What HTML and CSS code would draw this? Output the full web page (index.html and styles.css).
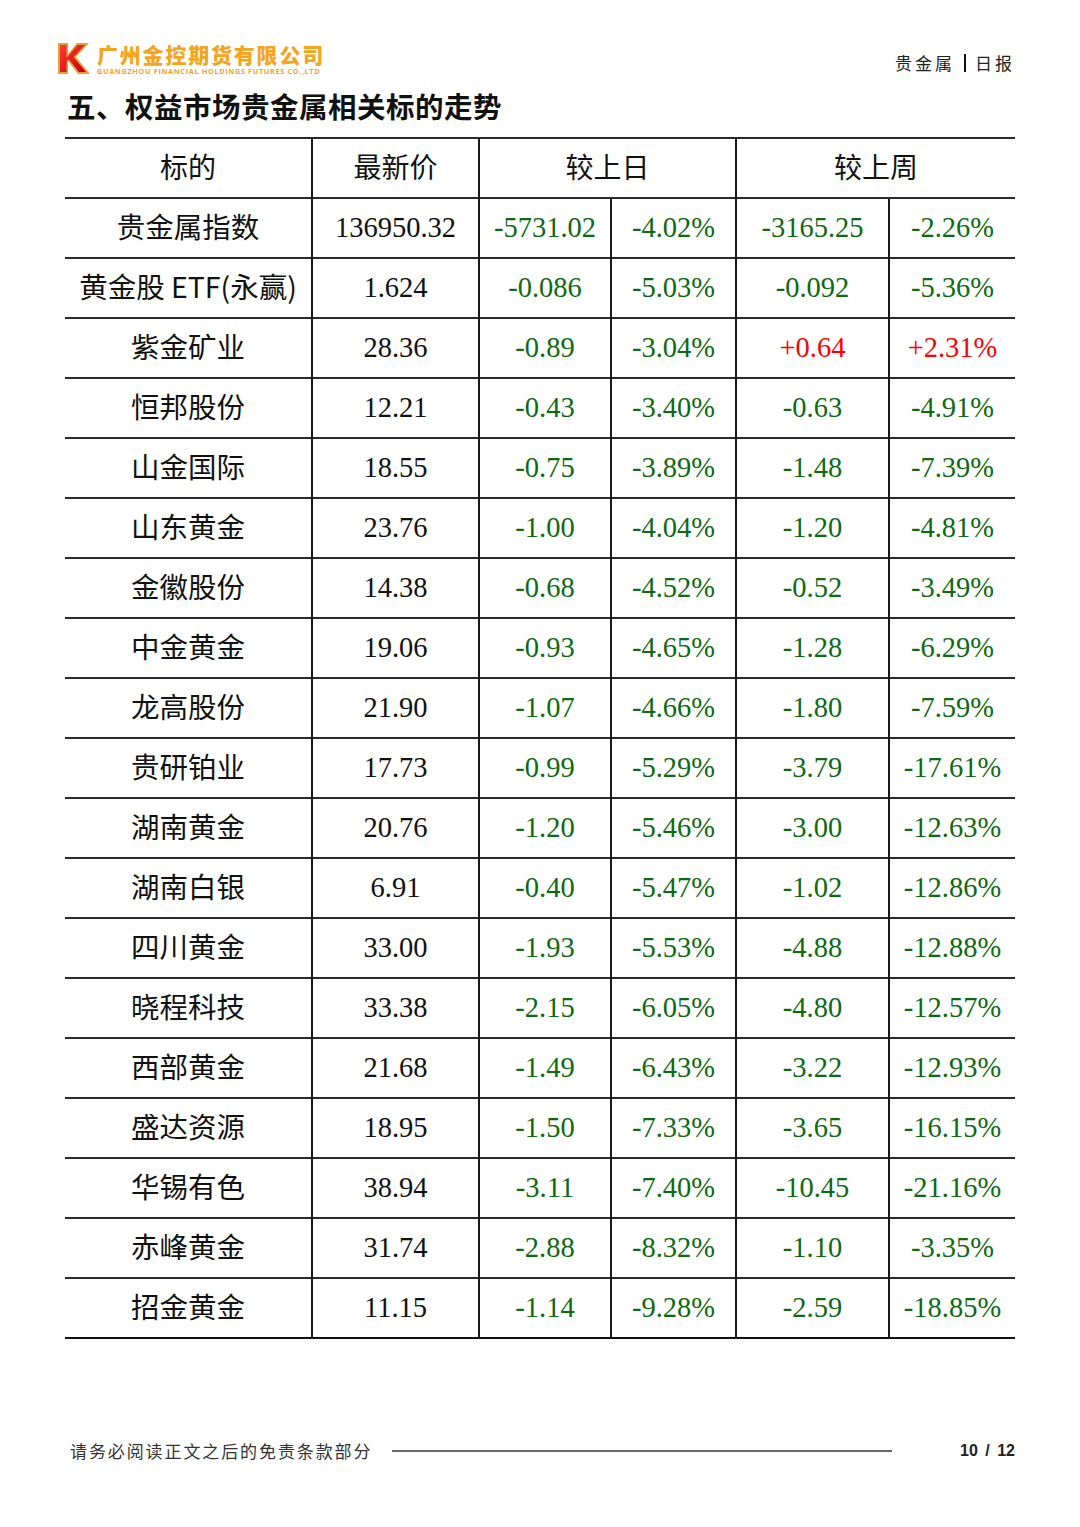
FILE: index.html
```html
<!DOCTYPE html>
<html lang="zh-CN">
<head>
<meta charset="utf-8">
<link rel="stylesheet" href="styles.css">
</head>
<body>
<div class="page">
  <header class="top">
    <div class="logo">
      <svg class="logo-k" width="34" height="33" viewBox="0 0 34 33">
        <defs>
          <linearGradient id="kg" x1="0" y1="0" x2="1" y2="1">
            <stop offset="0" stop-color="#ff3b2f"/>
            <stop offset="1" stop-color="#c8000a"/>
          </linearGradient>
        </defs>
        <path d="M1 1 H11 V12 L20 1 H32 L19 15 L33 32 H21 L11 19 V32 H1 Z" fill="#e0a33a"/>
        <path d="M3 3 H9.5 V16 L20.5 3 H28 L16.5 15 L29 30 H22 L11.5 17 L9.5 19.5 V30 H3 Z" fill="url(#kg)"/>
      </svg>
      <div class="logo-text">
        <div class="logo-cn">广州金控期货有限公司</div>
        <div class="logo-en">GUANGZHOU FINANCIAL HOLDINGS FUTURES CO.,LTD</div>
      </div>
    </div>
    <div class="doc-tag">贵金属 <span class="bar"></span> 日报</div>
  </header>

  <h1 class="title">五、权益市场贵金属相关标的走势</h1>

  <table class="quotes">
    <colgroup>
      <col class="c1"><col class="c2"><col class="c3"><col class="c4"><col class="c5"><col class="c6">
    </colgroup>
    <thead>
      <tr><th>标的</th><th>最新价</th><th colspan="2">较上日</th><th colspan="2">较上周</th></tr>
    </thead>
    <tbody>
      <tr><td class="name">贵金属指数</td><td>136950.32</td><td class="dn">-5731.02</td><td class="dn">-4.02%</td><td class="dn">-3165.25</td><td class="dn">-2.26%</td></tr>
      <tr><td class="name">黄金股 ETF(永赢)</td><td>1.624</td><td class="dn">-0.086</td><td class="dn">-5.03%</td><td class="dn">-0.092</td><td class="dn">-5.36%</td></tr>
      <tr><td class="name">紫金矿业</td><td>28.36</td><td class="dn">-0.89</td><td class="dn">-3.04%</td><td class="up">+0.64</td><td class="up">+2.31%</td></tr>
      <tr><td class="name">恒邦股份</td><td>12.21</td><td class="dn">-0.43</td><td class="dn">-3.40%</td><td class="dn">-0.63</td><td class="dn">-4.91%</td></tr>
      <tr><td class="name">山金国际</td><td>18.55</td><td class="dn">-0.75</td><td class="dn">-3.89%</td><td class="dn">-1.48</td><td class="dn">-7.39%</td></tr>
      <tr><td class="name">山东黄金</td><td>23.76</td><td class="dn">-1.00</td><td class="dn">-4.04%</td><td class="dn">-1.20</td><td class="dn">-4.81%</td></tr>
      <tr><td class="name">金徽股份</td><td>14.38</td><td class="dn">-0.68</td><td class="dn">-4.52%</td><td class="dn">-0.52</td><td class="dn">-3.49%</td></tr>
      <tr><td class="name">中金黄金</td><td>19.06</td><td class="dn">-0.93</td><td class="dn">-4.65%</td><td class="dn">-1.28</td><td class="dn">-6.29%</td></tr>
      <tr><td class="name">龙高股份</td><td>21.90</td><td class="dn">-1.07</td><td class="dn">-4.66%</td><td class="dn">-1.80</td><td class="dn">-7.59%</td></tr>
      <tr><td class="name">贵研铂业</td><td>17.73</td><td class="dn">-0.99</td><td class="dn">-5.29%</td><td class="dn">-3.79</td><td class="dn">-17.61%</td></tr>
      <tr><td class="name">湖南黄金</td><td>20.76</td><td class="dn">-1.20</td><td class="dn">-5.46%</td><td class="dn">-3.00</td><td class="dn">-12.63%</td></tr>
      <tr><td class="name">湖南白银</td><td>6.91</td><td class="dn">-0.40</td><td class="dn">-5.47%</td><td class="dn">-1.02</td><td class="dn">-12.86%</td></tr>
      <tr><td class="name">四川黄金</td><td>33.00</td><td class="dn">-1.93</td><td class="dn">-5.53%</td><td class="dn">-4.88</td><td class="dn">-12.88%</td></tr>
      <tr><td class="name">晓程科技</td><td>33.38</td><td class="dn">-2.15</td><td class="dn">-6.05%</td><td class="dn">-4.80</td><td class="dn">-12.57%</td></tr>
      <tr><td class="name">西部黄金</td><td>21.68</td><td class="dn">-1.49</td><td class="dn">-6.43%</td><td class="dn">-3.22</td><td class="dn">-12.93%</td></tr>
      <tr><td class="name">盛达资源</td><td>18.95</td><td class="dn">-1.50</td><td class="dn">-7.33%</td><td class="dn">-3.65</td><td class="dn">-16.15%</td></tr>
      <tr><td class="name">华锡有色</td><td>38.94</td><td class="dn">-3.11</td><td class="dn">-7.40%</td><td class="dn">-10.45</td><td class="dn">-21.16%</td></tr>
      <tr><td class="name">赤峰黄金</td><td>31.74</td><td class="dn">-2.88</td><td class="dn">-8.32%</td><td class="dn">-1.10</td><td class="dn">-3.35%</td></tr>
      <tr><td class="name">招金黄金</td><td>11.15</td><td class="dn">-1.14</td><td class="dn">-9.28%</td><td class="dn">-2.59</td><td class="dn">-18.85%</td></tr>
    </tbody>
  </table>

  <footer class="foot">
    <span class="disclaimer">请务必阅读正文之后的免责条款部分</span>
    <span class="rule"></span>
    <span class="pageno">10 / 12</span>
  </footer>
</div>
</body>
</html>
```

FILE: styles.css
```css
html, body {
  margin: 0;
  padding: 0;
  background: #ffffff;
}

.page {
  width: 1080px;
  height: 1527px;
  box-sizing: border-box;
  padding: 0 65px 0 65px;
  display: flex;
  flex-direction: column;
  font-family: "Noto Sans CJK SC", "Noto Sans", sans-serif;
  color: #111;
}

.top {
  display: flex;
  justify-content: space-between;
  align-items: flex-start;
  padding-top: 42px;
  margin-left: -8px;
  height: 36px;
}

.logo {
  display: flex;
  align-items: flex-start;
  gap: 6px;
}

.logo-k {
  display: block;
}

.logo-text {
  display: flex;
  flex-direction: column;
}

.logo-cn {
  font-family: "Noto Sans CJK SC", sans-serif;
  font-weight: 900;
  font-size: 21px;
  line-height: 24px;
  letter-spacing: 1.8px;
  color: #f4a51e;
  white-space: nowrap;
}

.logo-en {
  font-family: "Open Sans", "DejaVu Sans", sans-serif;
  font-weight: 700;
  font-size: 7.4px;
  line-height: 9px;
  letter-spacing: 0.6px;
  color: #f4a51e;
  white-space: nowrap;
  margin-top: 1px;
}

.doc-tag {
  font-family: "Noto Sans CJK SC", sans-serif;
  font-size: 17px;
  line-height: 20px;
  letter-spacing: 3px;
  color: #222;
  margin-top: 11px;
  display: flex;
  align-items: center;
  gap: 9px;
}

.doc-tag .bar {
  display: inline-block;
  width: 2px;
  height: 18px;
  background: #111;
}

.title {
  margin: 8px 0 0 2px;
  font-family: "Noto Sans CJK SC", sans-serif;
  font-weight: 700;
  font-size: 28.5px;
  line-height: 40px;
  letter-spacing: 0.5px;
  color: #111;
  height: 51px;
}

.quotes {
  width: 950px;
  border-collapse: collapse;
  table-layout: fixed;
  border-top: 2px solid #111;
  border-bottom: 2px solid #111;
}

.quotes col.c1 { width: 247px; }
.quotes col.c2 { width: 167px; }
.quotes col.c3 { width: 132px; }
.quotes col.c4 { width: 125px; }
.quotes col.c5 { width: 153px; }
.quotes col.c6 { width: 126px; }

.quotes tr {
  height: 60px;
}

.quotes th,
.quotes td {
  padding: 0;
  text-align: center;
  vertical-align: middle;
  border-top: 2px solid #2a2a2a;
  border-left: 2px solid #1a1a1a;
  white-space: nowrap;
}

.quotes th:first-child,
.quotes td:first-child {
  border-left: none;
}

.quotes th {
  font-family: "Noto Sans CJK SC", sans-serif;
  font-weight: 400;
  font-size: 28px;
  color: #111;
  padding-bottom: 4px;
}

.quotes td {
  font-family: "Liberation Serif", "Times New Roman", serif;
  font-size: 28.5px;
  color: #111;
  padding-bottom: 1px;
}

.quotes td.name {
  font-family: "Noto Sans CJK SC", sans-serif;
  font-size: 28.5px;
  padding-bottom: 5px;
}

.quotes td.dn {
  color: #0e6a12;
}

.quotes td.up {
  color: #ff0000;
}

.foot {
  margin-top: auto;
  margin-bottom: 64px;
  display: flex;
  align-items: center;
  padding-left: 5px;
}

.disclaimer {
  font-family: "Noto Sans CJK SC", sans-serif;
  font-size: 17px;
  letter-spacing: 1.9px;
  color: #333;
  white-space: nowrap;
}

.rule {
  width: 500px;
  height: 2px;
  background: #666;
  margin-left: 20px;
}

.pageno {
  margin-left: auto;
  font-family: "Liberation Sans Narrow", "Liberation Sans", Arial, sans-serif;
  font-weight: 700;
  font-size: 16px;
  word-spacing: 3px;
  color: #222;
}
```
